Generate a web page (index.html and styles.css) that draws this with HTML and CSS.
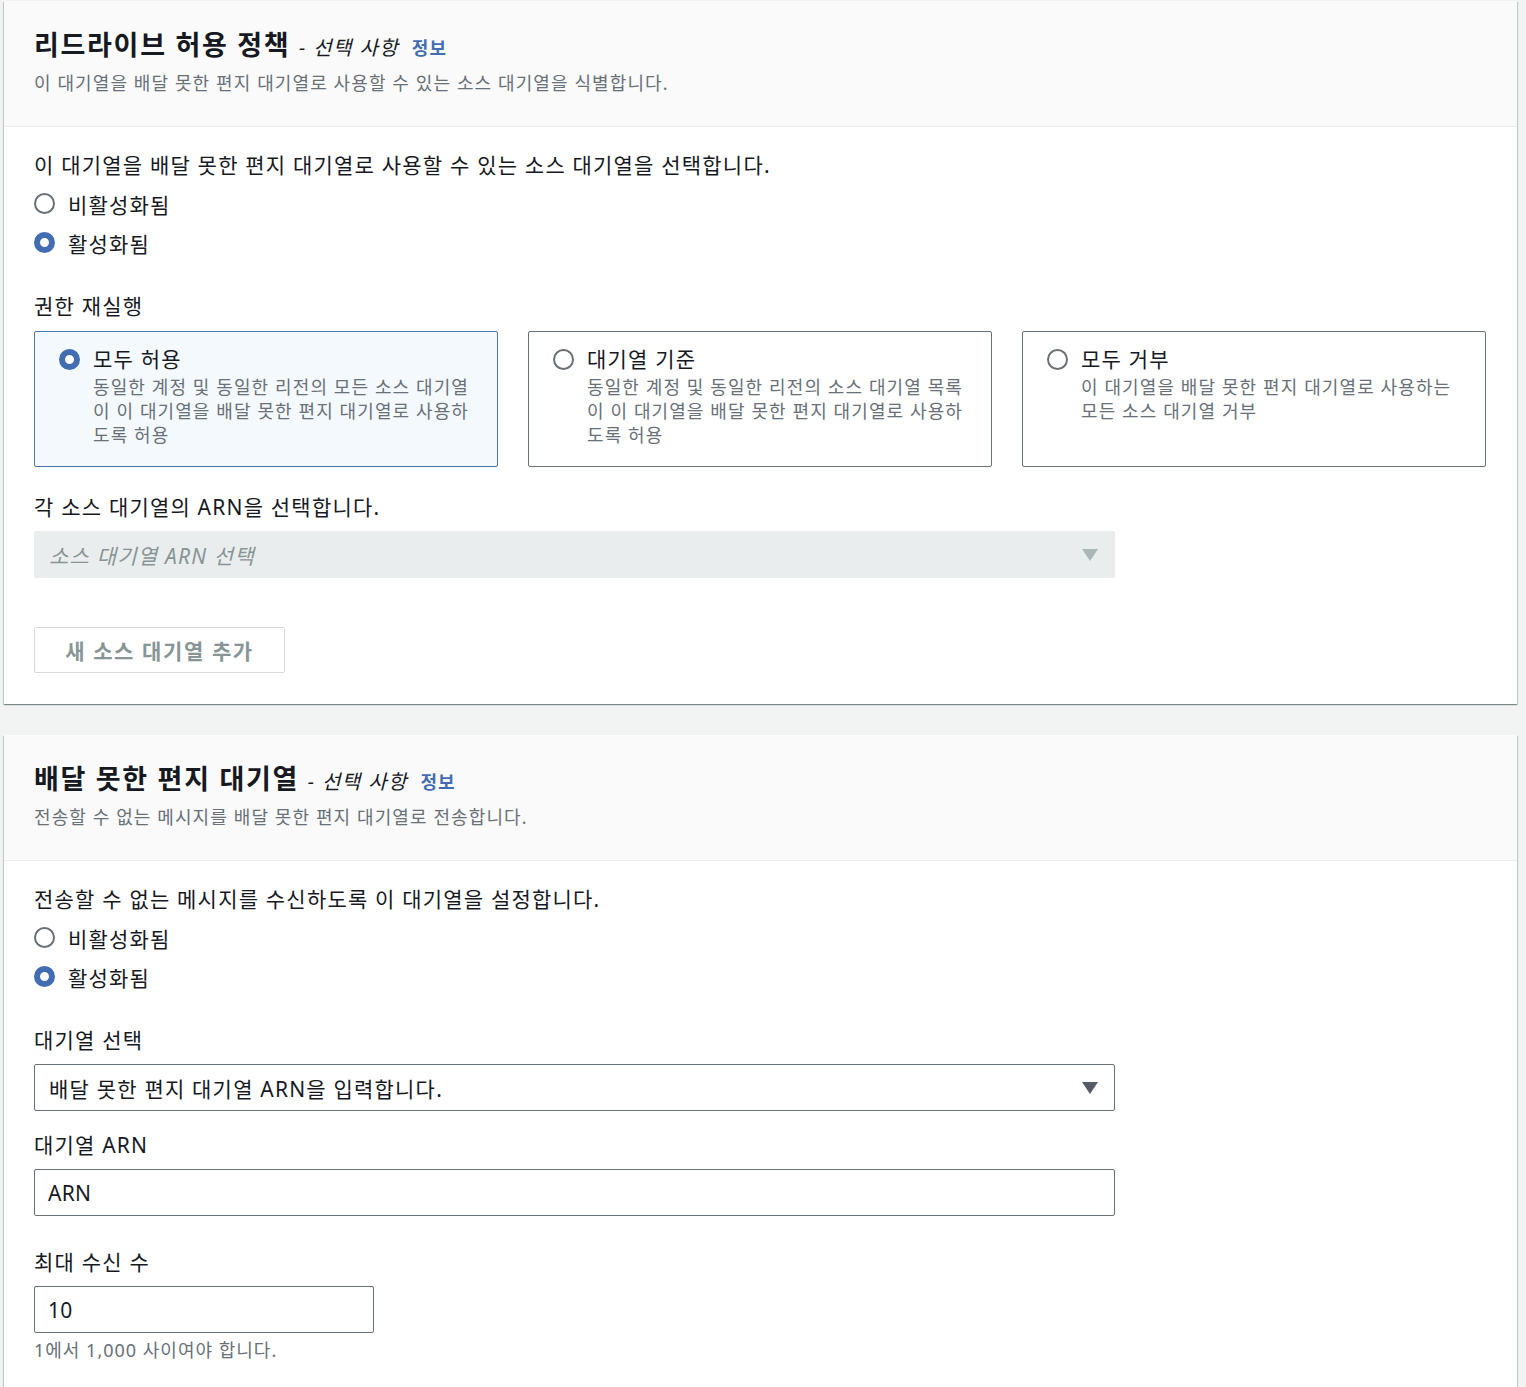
FILE: index.html
```html
<!DOCTYPE html>
<html lang="ko">
<head>
    <meta charset="UTF-8">
    <title>대기열 설정</title>
    <link rel="stylesheet" href="styles.css">
</head>
<body>
    <div class="panel">
        <div class="panel-header">
            <h2 class="panel-title">리드라이브 허용 정책 <span class="optional">- 선택 사항</span> <a class="info-link" href="#">정보</a></h2>
            <p class="panel-desc">이 대기열을 배달 못한 편지 대기열로 사용할 수 있는 소스 대기열을 식별합니다.</p>
        </div>
        <div class="panel-body">
            <p class="field-text">이 대기열을 배달 못한 편지 대기열로 사용할 수 있는 소스 대기열을 선택합니다.</p>
            <div class="radio-group">
                <label class="radio-row"><span class="radio"></span>비활성화됨</label>
                <label class="radio-row"><span class="radio checked"></span>활성화됨</label>
            </div>

            <div class="field-label section-gap">권한 재실행</div>
            <div class="tiles">
                <div class="tile selected">
                    <span class="radio checked"></span>
                    <div class="tile-text">
                        <div class="tile-title">모두 허용</div>
                        <div class="tile-desc">동일한 계정 및 동일한 리전의 모든 소스 대기열이 이 대기열을 배달 못한 편지 대기열로 사용하도록 허용</div>
                    </div>
                </div>
                <div class="tile">
                    <span class="radio"></span>
                    <div class="tile-text">
                        <div class="tile-title">대기열 기준</div>
                        <div class="tile-desc">동일한 계정 및 동일한 리전의 소스 대기열 목록이 이 대기열을 배달 못한 편지 대기열로 사용하도록 허용</div>
                    </div>
                </div>
                <div class="tile">
                    <span class="radio"></span>
                    <div class="tile-text">
                        <div class="tile-title">모두 거부</div>
                        <div class="tile-desc">이 대기열을 배달 못한 편지 대기열로 사용하는 모든 소스 대기열 거부</div>
                    </div>
                </div>
            </div>

            <div class="field-text arn-label">각 소스 대기열의 ARN을 선택합니다.</div>
            <div class="select disabled">
                <span class="placeholder">소스 대기열 ARN 선택</span>
                <span class="caret"></span>
            </div>

            <button class="btn-add" disabled>새 소스 대기열 추가</button>
        </div>
    </div>

    <div class="panel">
        <div class="panel-header">
            <h2 class="panel-title">배달 못한 편지 대기열 <span class="optional">- 선택 사항</span> <a class="info-link" href="#">정보</a></h2>
            <p class="panel-desc">전송할 수 없는 메시지를 배달 못한 편지 대기열로 전송합니다.</p>
        </div>
        <div class="panel-body">
            <p class="field-text">전송할 수 없는 메시지를 수신하도록 이 대기열을 설정합니다.</p>
            <div class="radio-group">
                <label class="radio-row"><span class="radio"></span>비활성화됨</label>
                <label class="radio-row"><span class="radio checked"></span>활성화됨</label>
            </div>

            <div class="field-label section-gap">대기열 선택</div>
            <div class="select">
                <span>배달 못한 편지 대기열 ARN을 입력합니다.</span>
                <span class="caret"></span>
            </div>

            <div class="field-label sub-gap">대기열 ARN</div>
            <div class="input">ARN</div>

            <div class="field-label field-gap">최대 수신 수</div>
            <div class="input narrow">10</div>
            <div class="hint">1에서 1,000 사이여야 합니다.</div>
        </div>
    </div>
</body>
</html>
```

FILE: styles.css
```css
body {
    margin: 0;
    padding: 1px 9px 0 4px;
    background: #f2f3f3;
    font-family: "Noto Sans", "Noto Sans CJK KR", sans-serif;
    color: #16191f;
    letter-spacing: 1.2px;
}

.panel {
    background: #fff;
    margin-bottom: 31px;
    box-shadow: 0 1px 1px 0 rgba(0,28,36,0.3), 1px 1px 1px 0 rgba(0,28,36,0.15), -1px 1px 1px 0 rgba(0,28,36,0.15);
}

.panel-header {
    background: #fafafa;
    border-bottom: 1px solid #eaeded;
    padding: 27px 30px 31px;
}

.panel-title {
    margin: 0;
    font-size: 27px;
    line-height: 34px;
    font-weight: 700;
    letter-spacing: 1.7px;
}

.optional {
    font-size: 20px;
    font-weight: 400;
    font-style: italic;
    letter-spacing: 1.4px;
}

.info-link {
    font-size: 18px;
    font-weight: 700;
    color: #436db3;
    text-decoration: none;
    margin-left: 4px;
    letter-spacing: 1px;
}

.panel-desc {
    margin: 6px 0 0;
    font-size: 18px;
    line-height: 24px;
    color: #687078;
    letter-spacing: 1.1px;
}

.panel-body {
    padding: 24px 30px 31px;
}

.field-text,
.field-label {
    margin: 0;
    font-size: 21px;
    line-height: 28px;
}

.radio-group {
    margin-top: 5px;
}

.radio-row {
    display: flex;
    align-items: center;
    height: 39px;
    font-size: 21px;
}

.radio {
    box-sizing: border-box;
    width: 21px;
    height: 21px;
    border-radius: 50%;
    border: 2px solid #687078;
    background: #fff;
    margin-right: 13px;
    flex-shrink: 0;
}

.radio.checked {
    border: 6.5px solid #436db3;
}

.section-gap {
    margin-top: 30px;
}

.tiles {
    display: grid;
    grid-template-columns: repeat(3, 464px);
    gap: 30px;
    margin-top: 11px;
}

.tile {
    box-sizing: border-box;
    height: 136px;
    display: flex;
    align-items: flex-start;
    padding: 13px 22px 0 24px;
    border: 1px solid #687078;
    border-radius: 2px;
}

.tile.selected {
    border-color: #4f73ab;
    background: #f4f9fd;
}

.tile .radio {
    margin-top: 4px;
    margin-right: 13px;
}

.tile-title {
    font-size: 21px;
    line-height: 28px;
}

.tile-desc {
    margin-top: 2px;
    font-size: 18px;
    line-height: 24px;
    color: #687078;
    letter-spacing: 1.1px;
}

.arn-label {
    margin-top: 26px;
}

.select,
.input {
    box-sizing: border-box;
    width: 1081px;
    height: 47px;
    display: flex;
    align-items: center;
    justify-content: space-between;
    padding: 0 16px 0 14px;
    border: 1px solid #687078;
    border-radius: 2px;
    font-size: 21px;
    margin-top: 10px;
}

.select.disabled {
    border-color: #eaeded;
    background: #eaeded;
}

.placeholder {
    font-style: italic;
    color: #879596;
}

.caret {
    width: 0;
    height: 0;
    border-left: 8px solid transparent;
    border-right: 8px solid transparent;
    border-top: 12px solid #545b64;
}

.disabled .caret {
    border-top-color: #aab7b8;
}

.input {
    padding-left: 13px;
    letter-spacing: 0.3px;
}

.input.narrow {
    width: 340px;
}

.btn-add {
    display: block;
    margin-top: 49px;
    width: 251px;
    height: 46px;
    background: #fff;
    border: 1px solid #d5dbdb;
    border-radius: 2px;
    font-family: inherit;
    font-size: 21px;
    font-weight: 700;
    letter-spacing: 1.6px;
    color: #879596;
}

.sub-gap {
    margin-top: 20px;
}

.field-gap {
    margin-top: 32px;
}

.hint {
    margin-top: 5px;
    font-size: 18px;
    line-height: 24px;
    color: #687078;
    letter-spacing: 1px;
}
```
